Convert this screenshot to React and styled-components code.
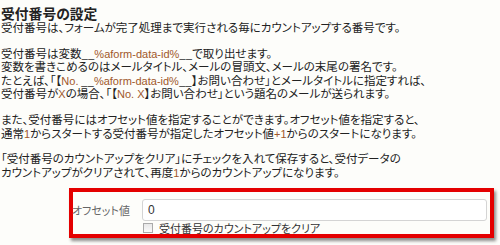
import React from "react";
import styled, { createGlobalStyle } from "styled-components";

const Global = createGlobalStyle`
  html, body { margin: 0; padding: 0; background: #fdfdfa; }
  body {
    font-family: "Noto Sans CJK JP", "Liberation Sans", sans-serif;
    color: #222;
  }
`;

const Page = styled.div`
  width: 500px;
  height: 245px;
  overflow: hidden;
  padding: 5px 0 0 1px;
  box-sizing: border-box;
`;

const Title = styled.h3`
  margin: 0;
  font-size: 13.8px;
  line-height: 16px;
  font-weight: 700;
  font-feature-settings: "palt";
`;

const Para = styled.p`
  margin: 0 0 ${(p) => p.$gap ?? 12}px;
  font-size: 11.5px;
  line-height: 13.6px;
  font-feature-settings: "palt";
  white-space: nowrap;
`;

const Var = styled.span`
  font-family: "Liberation Sans", sans-serif;
  color: #a0582a;
  font-size: 11px;
  line-height: 1;
`;

const Red = styled.div`
  margin-left: 68px;
  width: 425px;
  box-sizing: border-box;
  border: 4px solid #e40000;
  box-shadow: 2px 3px 3px rgba(0, 0, 0, 0.45);
  padding: 7px 3px 0 0;
  display: grid;
  grid-template-columns: 69px 1fr;
  align-items: center;
`;

const Label = styled.label`
  font-size: 11px;
  color: #666;
  font-feature-settings: "palt";
  margin-left: -1px;
`;

const Input = styled.input`
  height: 22px;
  box-sizing: border-box;
  border: 1px solid #d4d4d4;
  border-radius: 3px;
  background: #fff;
  font-family: "Liberation Sans", sans-serif;
  font-size: 12px;
  color: #333;
  padding: 0 5px;
  margin: 0;
  outline: none;
`;

const CheckRow = styled.div`
  grid-column: 2;
  display: flex;
  align-items: center;
  gap: 6px;
  height: 13px;
  font-size: 11px;
  font-feature-settings: "palt";
  color: #333;
`;

const Box = styled.span`
  width: 10px;
  height: 10px;
  box-sizing: border-box;
  border: 1px solid #aaa;
  background: linear-gradient(#e8e8e8, #fafafa);
  margin-left: 1px;
`;

export default function App() {
  return (
    <Page>
      <Global />
      <Title>受付番号の設定</Title>
      <Para>
        受付番号は、フォームが完了処理まで実行される毎にカウントアップする番号です。
      </Para>
      <Para>
        受付番号は変数__<Var>%aform-data-id%</Var>__で取り出せます。
        <br />
        変数を書きこめるのはメールタイトル、メールの冒頭文、メールの末尾の署名です。
        <br />
        たとえば、「【<Var>No.</Var> __<Var>%aform-data-id%</Var>__】お問い合わせ」とメールタイトルに指定すれば、
        <br />
        受付番号が<Var>X</Var>の場合、「【<Var>No. X</Var>】お問い合わせ」という題名のメールが送られます。
      </Para>
      <Para>
        また、受付番号にはオフセット値を指定することができます。オフセット値を指定すると、
        <br />
        通常<Var>1</Var>からスタートする受付番号が指定したオフセット値<Var>+1</Var>からのスタートになります。
      </Para>
      <Para $gap={9}>
        「受付番号のカウントアップをクリア」にチェックを入れて保存すると、受付データの
        <br />
        カウントアップがクリアされて、再度<Var>1</Var>からのカウントアップになります。
      </Para>
      <Red>
        <Label>オフセット値</Label>
        <Input defaultValue="0" />
        <CheckRow>
          <Box />
          受付番号のカウントアップをクリア
        </CheckRow>
      </Red>
    </Page>
  );
}
